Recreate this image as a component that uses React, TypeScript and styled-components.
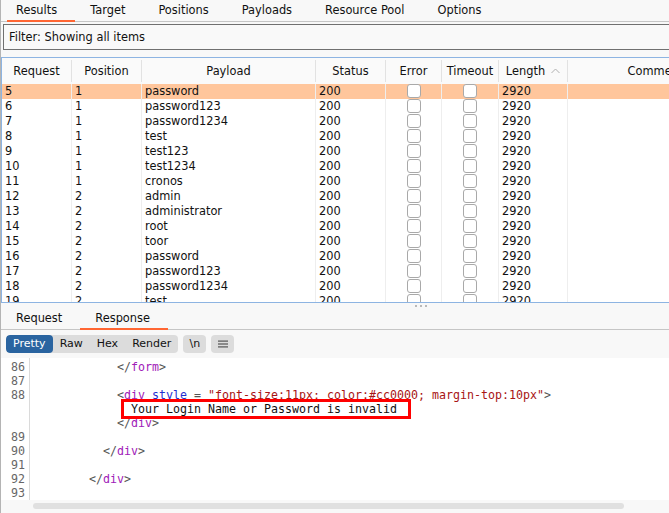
import React from "react";
import styled, { createGlobalStyle, css } from "styled-components";

const GlobalStyle = createGlobalStyle`
  html, body {
    margin: 0;
    padding: 0;
    background: #f8f8f8;
  }
  body {
    font-family: "DejaVu Sans", "Liberation Sans", sans-serif;
    font-size: 11.4px;
    color: #111;
  }
`;

const COLS = "70px 70px 174px 70px 56px 57px 69px 176px";
const MONO = `"DejaVu Sans Mono", "Liberation Mono", monospace`;

const Page = styled.div`
  width: 669px;
  height: 513px;
  overflow: hidden;
  display: flex;
  flex-direction: column;
  background: #f8f8f8;
  border-left: 1px solid #b4b4b4;
  box-sizing: border-box;
`;

const TabBar = styled.div`
  display: flex;
  height: 21px;
  border-bottom: 1px solid #c6c6c6;
  flex-shrink: 0;
`;

const Tab = styled.div<{ $active?: boolean; $inset?: number }>`
  position: relative;
  padding: 0 18px 0 15px;
  line-height: 20px;
  white-space: nowrap;
  color: #111;
  ${(p) =>
    p.$active &&
    css`
      &::after {
        content: "";
        position: absolute;
        left: ${p.$inset ?? 0}px;
        right: 0;
        bottom: -1px;
        height: 2px;
        background: #ff6633;
      }
    `}
`;

const FilterBox = styled.div`
  margin: 2px -20px 7px 2px;
  height: 26px;
  box-sizing: border-box;
  border: 1px solid #707070;
  background: #f9f9f9;
  padding-left: 5px;
  line-height: 24px;
  flex-shrink: 0;
`;

const Table = styled.div`
  height: 246px;
  box-sizing: border-box;
  border-top: 1px solid #8db4e2;
  border-bottom: 1px solid #8db4e2;
  border-left: 1px solid #8db4e2;
  background: #fff;
  overflow: hidden;
  flex-shrink: 0;
`;

const HeaderRow = styled.div`
  display: grid;
  grid-template-columns: ${COLS};
  height: 26px;
  background: #fafafa;
`;

const HeaderCell = styled.div`
  display: flex;
  align-items: center;
  justify-content: center;
  gap: 6px;
  margin: 2px 0;
  border-right: 1px solid #e2e2e2;
  white-space: nowrap;
  overflow: hidden;
`;

const Row = styled.div<{ $selected?: boolean }>`
  display: grid;
  grid-template-columns: ${COLS};
  height: 15px;
  background: ${(p) => (p.$selected ? "#ffc69c" : "#fff")};
`;

const Cell = styled.div<{ $center?: boolean }>`
  border-right: 1px solid #eeeeee;
  padding-left: ${(p) => (p.$center ? 0 : 3)}px;
  line-height: 15px;
  white-space: nowrap;
  overflow: hidden;
  display: flex;
  justify-content: ${(p) => (p.$center ? "center" : "flex-start")};
`;

const Check = styled.div`
  width: 14px;
  height: 14px;
  box-sizing: border-box;
  border: 1px solid #a9a9a9;
  border-radius: 3px;
  background: #fff;
`;

const Splitter = styled.div`
  height: 5px;
  display: flex;
  align-items: center;
  gap: 3px;
  padding-left: 414px;
  flex-shrink: 0;
`;

const Dot = styled.span`
  width: 2px;
  height: 2px;
  border-radius: 1px;
  background: #a4a4a4;
`;

const Toolbar = styled.div`
  display: flex;
  gap: 5px;
  padding: 5px 5px;
  height: 28px;
  box-sizing: border-box;
  flex-shrink: 0;
  font-size: 11px;
`;

const Segmented = styled.div`
  display: flex;
  background: #dcdcdc;
  border-radius: 4px;
  overflow: hidden;
`;

const SegButton = styled.div<{ $active?: boolean }>`
  padding: 0 7px;
  line-height: 18px;
  background: ${(p) => (p.$active ? "#2a64a0" : "transparent")};
  color: ${(p) => (p.$active ? "#fff" : "#111")};
  border-radius: ${(p) => (p.$active ? "4px" : "0")};
`;

const ToolButton = styled.div`
  min-width: 11px;
  padding: 0 6px;
  line-height: 18px;
  background: #dcdcdc;
  border-radius: 4px;
  display: flex;
  align-items: center;
  justify-content: center;
`;

const Editor = styled.div`
  display: flex;
  height: 142px;
  background: #fff;
  flex-shrink: 0;
`;

const Gutter = styled.div`
  width: 29px;
  box-sizing: border-box;
  border-right: 1px solid #dadada;
  padding: 2px 4px 0 0;
  text-align: right;
  font-family: ${MONO};
  font-size: 11.63px;
  line-height: 14px;
  color: #666;
`;

const Code = styled.div`
  flex: 1;
  padding: 2px 0 0 3px;
  font-family: ${MONO};
  font-size: 11.63px;
  line-height: 14px;
  white-space: pre;
  overflow: hidden;
`;

const CodeLine = styled.div`
  height: 14px;
`;

const tokenColors = {
  punct: "#555",
  tag: "#a020b8",
  attr: "#1f2fd0",
  str: "#a81414",
  text: "#111",
};

const Tok = styled.span<{ $k: keyof typeof tokenColors }>`
  color: ${(p) => tokenColors[p.$k]};
`;

const Highlight = styled.span`
  position: relative;
  color: #111;
  &::after {
    content: "";
    position: absolute;
    left: -10px;
    right: -14px;
    top: -3px;
    bottom: -3px;
    border: 3px solid #ff0000;
  }
`;

const ScrollStrip = styled.div`
  height: 13px;
  padding: 3px 45px 0 32px;
  box-sizing: border-box;
  background: #f8f8f8;
`;

const Thumb = styled.div`
  height: 6px;
  border-radius: 3px;
  background: #e0e0e0;
`;

const rows: [string, string, string][] = [
  ["5", "1", "password"],
  ["6", "1", "password123"],
  ["7", "1", "password1234"],
  ["8", "1", "test"],
  ["9", "1", "test123"],
  ["10", "1", "test1234"],
  ["11", "1", "cronos"],
  ["12", "2", "admin"],
  ["13", "2", "administrator"],
  ["14", "2", "root"],
  ["15", "2", "toor"],
  ["16", "2", "password"],
  ["17", "2", "password123"],
  ["18", "2", "password1234"],
  ["19", "2", "test"],
];

const sp = (n: number) => " ".repeat(n);

const CloseDiv = ({ indent, name = "div" }: { indent: number; name?: string }) => (
  <>
    {sp(indent)}
    <Tok $k="punct">{"</"}</Tok>
    <Tok $k="tag">{name}</Tok>
    <Tok $k="punct">{">"}</Tok>
  </>
);

const ChevronUp = () => (
  <svg width="9" height="6" viewBox="0 0 9 6">
    <polyline points="0.5,5 4.5,1 8.5,5" fill="none" stroke="#b0b0b0" strokeWidth="1" />
  </svg>
);

const MenuIcon = () => (
  <svg width="10" height="8" viewBox="0 0 10 8">
    <rect x="0" y="0.5" width="10" height="1.2" fill="#555" />
    <rect x="0" y="3.4" width="10" height="1.2" fill="#555" />
    <rect x="0" y="6.3" width="10" height="1.2" fill="#555" />
  </svg>
);

export default function App() {
  const lineNos = ["86", "87", "88", "", "", "89", "90", "91", "92", "93"];
  return (
    <>
      <GlobalStyle />
      <Page>
        <TabBar>
          <Tab $active $inset={6}>Results</Tab>
          <Tab>Target</Tab>
          <Tab>Positions</Tab>
          <Tab>Payloads</Tab>
          <Tab>Resource Pool</Tab>
          <Tab>Options</Tab>
        </TabBar>
        <FilterBox>Filter: Showing all items</FilterBox>
        <Table>
          <HeaderRow>
            <HeaderCell>Request</HeaderCell>
            <HeaderCell>Position</HeaderCell>
            <HeaderCell>Payload</HeaderCell>
            <HeaderCell>Status</HeaderCell>
            <HeaderCell>Error</HeaderCell>
            <HeaderCell>Timeout</HeaderCell>
            <HeaderCell>
              Length <ChevronUp />
            </HeaderCell>
            <HeaderCell>Comment</HeaderCell>
          </HeaderRow>
          {rows.map(([req, pos, payload], i) => (
            <Row key={req} $selected={i === 0}>
              <Cell>{req}</Cell>
              <Cell>{pos}</Cell>
              <Cell>{payload}</Cell>
              <Cell>200</Cell>
              <Cell $center>
                <Check />
              </Cell>
              <Cell $center>
                <Check />
              </Cell>
              <Cell>2920</Cell>
              <Cell />
            </Row>
          ))}
        </Table>
        <Splitter>
          <Dot />
          <Dot />
          <Dot />
        </Splitter>
        <TabBar>
          <Tab>Request</Tab>
          <Tab $active>Response</Tab>
        </TabBar>
        <Toolbar>
          <Segmented>
            <SegButton $active>Pretty</SegButton>
            <SegButton>Raw</SegButton>
            <SegButton>Hex</SegButton>
            <SegButton>Render</SegButton>
          </Segmented>
          <ToolButton>\n</ToolButton>
          <ToolButton>
            <MenuIcon />
          </ToolButton>
        </Toolbar>
        <Editor>
          <Gutter>
            {lineNos.map((n, i) => (
              <CodeLine key={i}>{n}</CodeLine>
            ))}
          </Gutter>
          <Code>
            <CodeLine>
              <CloseDiv indent={12} name="form" />
            </CodeLine>
            <CodeLine />
            <CodeLine>
              {sp(12)}
              <Tok $k="punct">{"<"}</Tok>
              <Tok $k="tag">div</Tok> <Tok $k="attr">style</Tok>
              <Tok $k="punct">{" = "}</Tok>
              <Tok $k="str">"font-size:11px; color:#cc0000; margin-top:10px"</Tok>
              <Tok $k="punct">{">"}</Tok>
            </CodeLine>
            <CodeLine>
              {sp(14)}
              <Highlight>Your Login Name or Password is invalid</Highlight>
            </CodeLine>
            <CodeLine>
              <CloseDiv indent={12} />
            </CodeLine>
            <CodeLine />
            <CodeLine>
              <CloseDiv indent={10} />
            </CodeLine>
            <CodeLine />
            <CodeLine>
              <CloseDiv indent={8} />
            </CodeLine>
            <CodeLine />
          </Code>
        </Editor>
        <ScrollStrip>
          <Thumb />
        </ScrollStrip>
      </Page>
    </>
  );
}
